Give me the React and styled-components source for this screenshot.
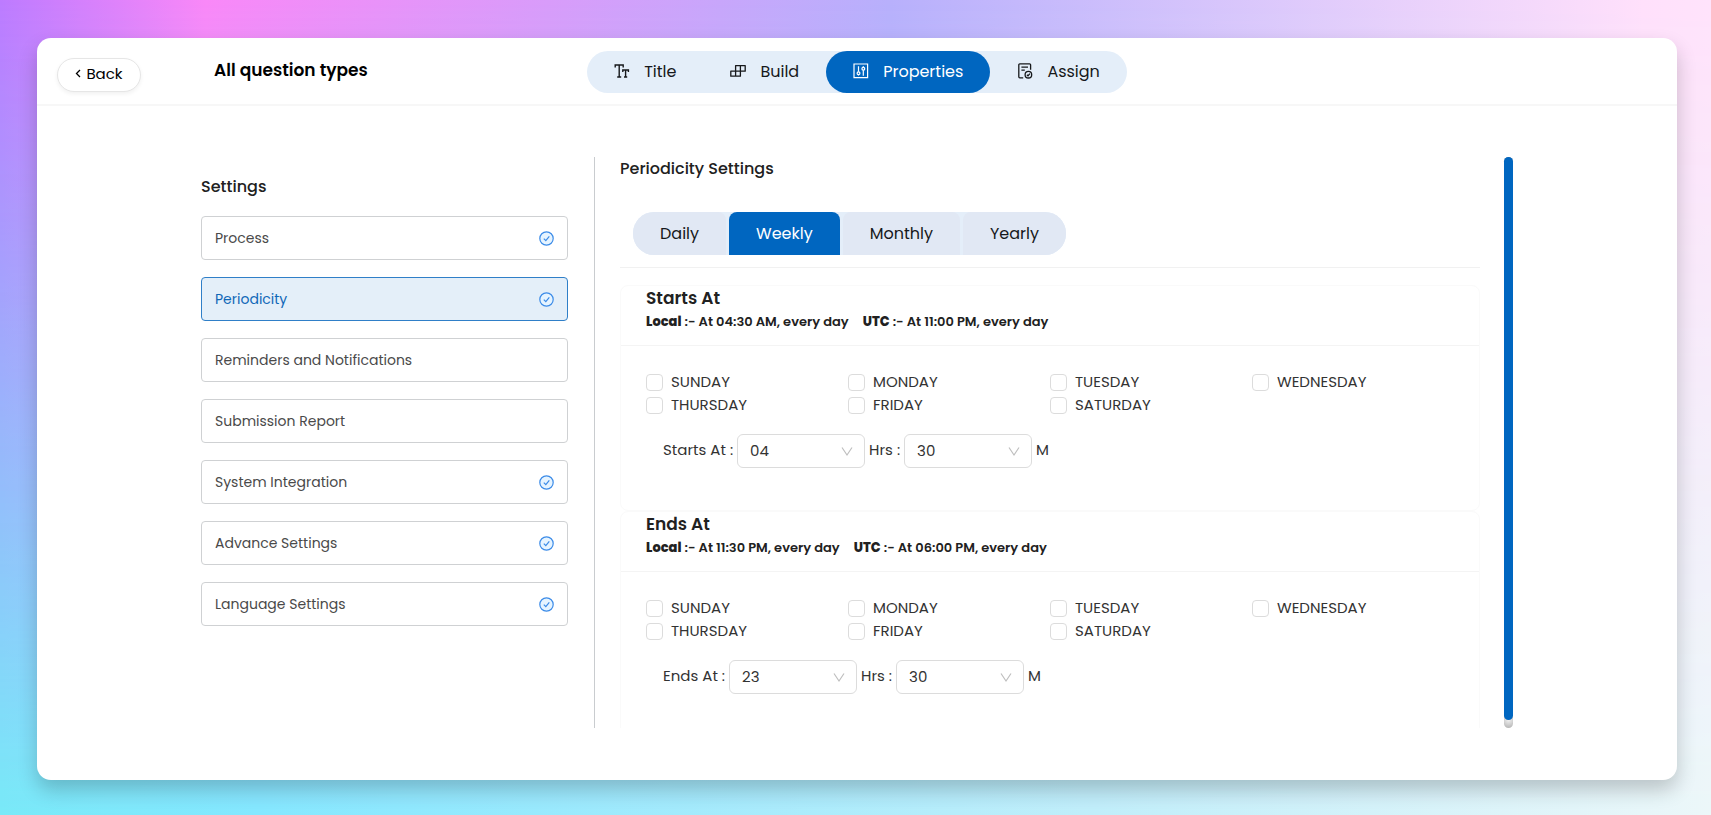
import React, { useState } from 'react'
import styled, { createGlobalStyle } from 'styled-components'

const GlobalStyle = createGlobalStyle`
  * {
    box-sizing: border-box;
  }

  body {
    margin: 0;
    font-family: Poppins, Inter, sans-serif;
    color: #212121;
  }

  button, input, select {
    font-family: inherit;
    color: inherit;
  }

  h1, h2, h3, p {
    margin: 0;
  }
`

const Backdrop = styled.div`
  position: relative;
  min-height: 100vh;
  padding: 38px 34px 35px 37px;
  display: flex;
  background: linear-gradient(90deg, #bd7bff 0%, #f988f8 12%, #b8b0fc 52%, #ffe0fb 96%, #ffe3fb 100%);

  &::before {
    content: '';
    position: absolute;
    inset: 0;
    background: linear-gradient(90deg, #78eaf8 0%, #84e8ff 15%, #c0eefa 64%, #ecf7f9 100%);
    mask-image: linear-gradient(transparent, #000);
  }
`

const Window = styled.main`
  position: relative;
  flex: 1;
  min-width: 0;
  display: flex;
  flex-direction: column;
  background: #fff;
  border-radius: 14px;
  box-shadow: 0 10px 20px rgba(0, 0, 0, 0.2);
`

const Header = styled.header`
  height: 68px;
  display: grid;
  grid-template-columns: 1fr auto 1fr;
  border-bottom: 2px solid #f7f7f7;
`

const HeaderLeft = styled.div`
  display: flex;
  align-items: flex-start;
  padding: 20px 20px 0;
  gap: 73px;
`

const BackButton = styled.button`
  width: 84px;
  height: 34px;
  display: flex;
  align-items: center;
  justify-content: center;
  gap: 5px;
  padding: 0 0 4px;
  border: 1px solid #e6e6e6;
  border-radius: 17px;
  background: #fff;
  box-shadow: 0 2px 4px rgba(0, 0, 0, 0.06);
  font-size: 15px;
  color: #000;
  cursor: pointer;
`

const FormName = styled.h1`
  font-size: 17px;
  line-height: 24px;
  font-weight: 600;
  color: #000;
  white-space: nowrap;
`

const Steps = styled.nav`
  align-self: start;
  height: 42px;
  margin-top: 13px;
  display: flex;
  border-radius: 21px;
  background: #e4eef9;
`

const Step = styled.button`
  display: flex;
  align-items: center;
  gap: 14px;
  padding: 0 27px 2px;
  border: 0;
  border-radius: 21px;
  font-size: 16px;
  background: ${({ $active }) => $active ? '#0066c0' : 'transparent'};
  color: ${({ $active }) => $active ? '#fff' : '#16181b'};
  cursor: pointer;
`

const Body = styled.div`
  flex: 1;
  min-height: 0;
  display: grid;
  grid-template-columns: 394px minmax(0, 1fr);
  padding: 51px 164px 52px;
`

const Sidebar = styled.aside`
  padding: 17px 26px 0 0;
  border-right: 1px solid #c9cccf;
`

const SidebarTitle = styled.h2`
  font-size: 16px;
  line-height: 26px;
  font-weight: 500;
`

const SettingList = styled.div`
  display: flex;
  flex-direction: column;
  gap: 17px;
  margin-top: 16px;
`

const Setting = styled.button`
  height: 44px;
  display: flex;
  align-items: center;
  justify-content: space-between;
  padding: 0 13px;
  border: 1px solid ${({ $active }) => $active ? '#2f7fc8' : '#cfd1d3'};
  border-radius: 4px;
  font-size: 14px;
  background: ${({ $active }) => $active ? '#e4eff9' : '#fff'};
  color: ${({ $active }) => $active ? '#1068b8' : '#4a4a4a'};
  cursor: pointer;
`

const Scroller = styled.div`
  display: flex;
  min-height: 0;
  height: 571px;
  padding-left: 25px;
`

const Content = styled.div`
  flex: 1;
  min-width: 0;
  overflow: hidden;
`

const ScrollTrack = styled.div`
  flex: none;
  width: 9px;
  margin-left: 24px;
  padding-bottom: 8px;
  border-radius: 5px;
  background: radial-gradient(circle at 50% 563px, #f0f0f0, #b0b0b0 9px);
`

const ScrollThumb = styled.div`
  height: 100%;
  border-radius: 5px;
  background: #0066c0;
`

const ContentTitle = styled.h2`
  font-size: 16px;
  line-height: 24px;
  font-weight: 500;
`

const TabBar = styled.div`
  padding: 31px 13px 12px;
  border-bottom: 1px solid #f1f1f1;
`

const Tabs = styled.div`
  display: inline-flex;
  height: 43px;
  gap: 3px;
  vertical-align: top;
  border-radius: 21px;
  overflow: hidden;
  background: #e4eef9;
`

const Tab = styled.button`
  padding: 0 27px;
  border: 0;
  border-radius: 8px 8px 0 0;
  font-size: 16px;
  background: ${({ $active }) => $active ? '#0066c0' : '#e1e8f4'};
  color: ${({ $active }) => $active ? '#fff' : '#16181b'};
  cursor: pointer;
`

const Panels = styled.div`
  padding-top: 17px;
`

const Panel = styled.section`
  height: 226px;
  border: 1px solid #fafafa;
  border-radius: 8px;
`

const PanelHead = styled.div`
  height: 60px;
  padding: 0 25px;
  border-bottom: 1px solid #f4f4f4;
`

const PanelTitle = styled.h3`
  font-size: 17px;
  line-height: 24px;
  font-weight: 600;
`

const Summary = styled.p`
  display: flex;
  gap: 14px;
  font-size: 13px;
  line-height: 24px;
  font-weight: 600;

  b {
    font-weight: 800;
  }
`

const Days = styled.div`
  display: grid;
  grid-template-columns: repeat(4, 1fr);
  padding: 25px 25px 0;
`

const Day = styled.label`
  display: flex;
  align-items: center;
  gap: 8px;
  height: 23px;
  font-size: 15px;
  line-height: 20px;
  color: #333;

  span {
    padding-bottom: 2px;
  }
`

const Check = styled.input`
  appearance: none;
  width: 17px;
  height: 17px;
  margin: 0;
  border: 1px solid #dcdcdc;
  border-radius: 4px;
  background: #fff;

  &:checked {
    background: #0066c0;
  }
`

const TimeRow = styled.div`
  display: flex;
  align-items: center;
  gap: 4px;
  padding: 17px 42px 0;
  font-size: 15px;
  line-height: 20px;
  color: #333;

  label, span {
    padding-bottom: 2px;
  }
`

const SelectBox = styled.div`
  position: relative;
  width: 128px;
  height: 34px;

  svg {
    position: absolute;
    right: 12px;
    top: 12px;
    pointer-events: none;
  }
`

const Select = styled.select`
  appearance: none;
  width: 100%;
  height: 100%;
  padding: 0 12px 2px;
  border: 1px solid #dcdcdc;
  border-radius: 6px;
  background: #fff;
  font-size: 15px;
`

const ChevronLeft = () =>
  <svg width="6" height="9" viewBox="0 0 6 9" fill="none" stroke="currentColor" strokeWidth="1.3">
    <path d="M5 1 1.5 4.5 5 8" />
  </svg>

const ChevronDown = () =>
  <svg width="12" height="11" viewBox="0 0 12 11" fill="none" stroke="#bfbfbf" strokeWidth="1.2">
    <path d="M1 1.5 6 9l5-7.5" />
  </svg>

const CheckCircle = () =>
  <svg width="15" height="15" viewBox="0 0 15 15" fill="#e6f4ff" stroke="#3b8be8" strokeWidth="1.2">
    <circle cx="7.5" cy="7.5" r="6.7" />
    <path d="m4.8 7.7 2 2 3.5-4.3" fill="none" />
  </svg>

const TitleIcon = () =>
  <svg width="16" height="16" viewBox="0 0 16 16" fill="none" stroke="currentColor" strokeWidth="1.4">
    <path d="M1.2 4.6V2h8v2.6M5.2 2v12M3.2 14h4M8.8 9V7h5.6v2M11.6 7v7M10 14h3.2" />
  </svg>

const BuildIcon = () =>
  <svg width="16" height="16" viewBox="0 0 16 16" fill="none" stroke="currentColor" strokeWidth="1.3" strokeLinejoin="round">
    <path d="M5.6 2.6h9.6v5.6H5.6zM.8 8.2h9.6v5H.8zM10.4 2.6v5.6M5.6 8.2v5" />
  </svg>

const PropertiesIcon = () =>
  <svg width="16" height="16" viewBox="0 0 16 16" fill="none" stroke="currentColor" strokeWidth="1.2">
    <path d="M1 1h13.6v13.6H1zM5.5 3.2v5.6M5.5 11.6v1M10.3 3.2v1.2M10.3 7.2v5.6" />
    <circle cx="5.5" cy="10.2" r="1.4" />
    <circle cx="10.3" cy="5.8" r="1.4" />
  </svg>

const AssignIcon = () =>
  <svg width="16" height="16" viewBox="0 0 16 16" fill="none" stroke="currentColor" strokeWidth="1.3">
    <path d="M6.2 14.8H2.8a1 1 0 0 1-1-1V1.8a1 1 0 0 1 1-1h9.8a1 1 0 0 1 1 1v5M4.4 4.2H11M4.4 7.2h3.4" />
    <circle cx="11.4" cy="11.7" r="3.3" />
    <path d="m9.9 11.8 1.1 1.1 1.9-2.2" />
  </svg>

const steps = [
  { name: 'Title', Icon: TitleIcon },
  { name: 'Build', Icon: BuildIcon },
  { name: 'Properties', Icon: PropertiesIcon },
  { name: 'Assign', Icon: AssignIcon },
]

const settings = [
  { name: 'Process', done: true },
  { name: 'Periodicity', done: true },
  { name: 'Reminders and Notifications' },
  { name: 'Submission Report' },
  { name: 'System Integration', done: true },
  { name: 'Advance Settings', done: true },
  { name: 'Language Settings', done: true },
]

const tabs = ['Daily', 'Weekly', 'Monthly', 'Yearly']

const days = ['SUNDAY', 'MONDAY', 'TUESDAY', 'WEDNESDAY', 'THURSDAY', 'FRIDAY', 'SATURDAY']

const hours = Array.from({ length: 24 }, (_, i) => String(i).padStart(2, '0'))
const minutes = ['00', '15', '30', '45']

const TimeSelect = ({ id, value, options }) =>
  <SelectBox>
    <Select id={id} defaultValue={value}>
      {options.map(o => <option key={o}>{o}</option>)}
    </Select>
    <ChevronDown />
  </SelectBox>

const Schedule = ({ id, title, local, utc, hour, minute }) =>
  <Panel>
    <PanelHead>
      <PanelTitle>{title}</PanelTitle>
      <Summary>
        <span><b>Local</b> :- {local}</span>
        <span><b>UTC</b> :- {utc}</span>
      </Summary>
    </PanelHead>
    <Days>
      {days.map(day =>
        <Day key={day}>
          <Check type="checkbox" />
          <span>{day}</span>
        </Day>
      )}
    </Days>
    <TimeRow>
      <label htmlFor={`${id}-hour`}>{title} :</label>
      <TimeSelect id={`${id}-hour`} value={hour} options={hours} />
      <label htmlFor={`${id}-minute`}>Hrs :</label>
      <TimeSelect id={`${id}-minute`} value={minute} options={minutes} />
      <span>M</span>
    </TimeRow>
  </Panel>

export default function App() {
  const [step, setStep] = useState('Properties')
  const [setting, setSetting] = useState('Periodicity')
  const [tab, setTab] = useState('Weekly')

  return (
    <Backdrop>
      <GlobalStyle />
      <Window>
        <Header>
          <HeaderLeft>
            <BackButton><ChevronLeft />Back</BackButton>
            <FormName>All question types</FormName>
          </HeaderLeft>
          <Steps>
            {steps.map(({ name, Icon }) =>
              <Step key={name} $active={name === step} onClick={() => setStep(name)}>
                <Icon />
                {name}
              </Step>
            )}
          </Steps>
        </Header>
        <Body>
          <Sidebar>
            <SidebarTitle>Settings</SidebarTitle>
            <SettingList>
              {settings.map(({ name, done }) =>
                <Setting key={name} $active={name === setting} onClick={() => setSetting(name)}>
                  {name}
                  {done && <CheckCircle />}
                </Setting>
              )}
            </SettingList>
          </Sidebar>
          <Scroller>
            <Content>
              <ContentTitle>Periodicity Settings</ContentTitle>
              <TabBar>
                <Tabs>
                  {tabs.map(name =>
                    <Tab key={name} $active={name === tab} onClick={() => setTab(name)}>{name}</Tab>
                  )}
                </Tabs>
              </TabBar>
              <Panels>
                <Schedule
                  id="starts"
                  title="Starts At"
                  local="At 04:30 AM, every day"
                  utc="At 11:00 PM, every day"
                  hour="04"
                  minute="30"
                />
                <Schedule
                  id="ends"
                  title="Ends At"
                  local="At 11:30 PM, every day"
                  utc="At 06:00 PM, every day"
                  hour="23"
                  minute="30"
                />
              </Panels>
            </Content>
            <ScrollTrack><ScrollThumb /></ScrollTrack>
          </Scroller>
        </Body>
      </Window>
    </Backdrop>
  )
}
